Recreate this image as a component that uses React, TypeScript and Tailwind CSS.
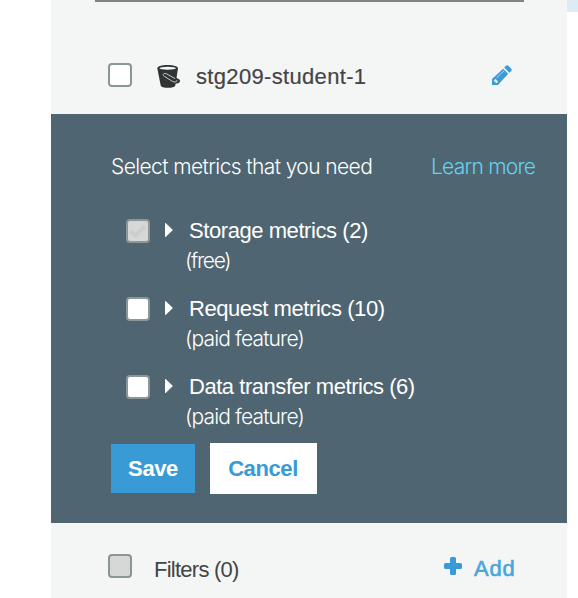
import React from "react";

const SANS = "font-['Liberation_Sans',Arial,sans-serif]";
const LIGHT = "font-['Inter',sans-serif] font-light";

function Checkbox({ className = "", checked = false }: { className?: string; checked?: boolean }) {
  return (
    <span className={`flex size-6 shrink-0 items-center justify-center rounded-[4px] border-2 ${className}`}>
      {checked && (
        <svg viewBox="0 0 18 14" className="h-3.5 w-[18px]" fill="none" stroke="#cbcecd" strokeWidth="4">
          <path d="M1.5 7 6.5 11.5 16 2" />
        </svg>
      )}
    </span>
  );
}

function BucketIcon() {
  return (
    <svg viewBox="0 0 24 24" className="size-6" fill="none">
      <path d="M.3 3.300C.3 1.300 4.800 0 10.500 0S21 1.300 21 3.300L18.300 20.500C17.600 23.600 4.300 23.600 3.700 20.500Z" fill="#303434" />
      <ellipse cx="10.700" cy="3.200" rx="8.300" ry="1.500" fill="#f4f6f6" />
      <path d="M18.500 13.600C20.500 15.400 21.800 14.200 22 15.800 22 18.200 17.500 17.800 13 15" stroke="#303434" strokeWidth="2.200" strokeLinecap="round" />
      <path d="M17.800 13.400 9.200 8.700C6.800 7.700 5 9.700 7.300 11.300L14.500 15.800C16.500 17 18 17.300 19 16.700" stroke="#d8dbdb" strokeWidth="0.900" strokeLinecap="round" />
    </svg>
  );
}

function PencilIcon() {
  return (
    <svg viewBox="0 0 20 20" className="size-5">
      <path d="M0 14 11.200 3.800 16.200 8.800 6 20H0Z" fill="#3a9bd7" />
      <path d="m12.200 2.600 1.500-1.700c.8-.9 2-.9 2.900 0l2.500 2.500c.9.900.9 2 0 2.900L17.400 7.800Z" fill="#3a9bd7" />
      <path d="m4.600 12.800 7.600-7.200" stroke="#b3d7ed" strokeWidth="1" />
      <path d="m2 15 1.500-1 2.600 2.600-1 1.500H3.500V16.500H2Z" fill="#e4eff5" />
    </svg>
  );
}

function Metric({ name, note, tracking, noteTracking, checked = false }: { name: string; note: string; tracking: string; noteTracking: string; checked?: boolean }) {
  return (
    <div className="flex h-[78px] items-start">
      <Checkbox checked={checked} className={`mt-[3px] border-[#8e9798] ${checked ? "bg-[#d5d8d7]" : "bg-white"}`} />
      <svg viewBox="0 0 8 14" className="mt-[7px] ml-[15px] h-3.5 w-2 shrink-0" fill="white">
        <path d="M0 .6C0 0 .5 0 .9.300L7.400 6.400Q8 7 7.400 7.600L.9 13.700C.4 14 0 14 0 13.400Z" />
      </svg>
      <div className="ml-3 leading-[30px] text-white">
        <div className={`pl-1 text-[22px] ${tracking} ${SANS}`}>{name}</div>
        <div className={`text-[21px] ${noteTracking} ${LIGHT}`}>{note}</div>
      </div>
    </div>
  );
}

export default function App() {
  return (
    <div className={`flex h-[598px] w-[578px] overflow-hidden bg-white whitespace-nowrap ${SANS}`}>
      <main className="ml-[51px] w-[516px] shrink-0 bg-[#f4f6f6]">
        <section className="h-[114px]">
          <div className="ml-11 h-0.5 w-[429px] bg-[#828282]" />
          <div className="flex items-start pt-[61px] pl-[57px]">
            <Checkbox className="border-[#8b9697] bg-white" />
            <span className="mt-[2px] ml-[25px]"><BucketIcon /></span>
            <span className="-mt-px ml-[15px] w-[180px] text-[22px] leading-[30px] tracking-[0.33px] text-[#444] [-webkit-text-stroke:0.2px_#444]">stg209-student-1</span>
            <span className="mt-[2px] ml-[116px]"><PencilIcon /></span>
          </div>
        </section>
        <section className="h-[409px] bg-[#4f6672] pt-[38px] pl-[60px]">
          <div className={`flex text-[21px] leading-[30px] ${LIGHT}`}>
            <span className="w-[320px] tracking-[-0.6px] text-white">Select metrics that you need</span>
            <a className="tracking-[-0.77px] text-[#65d2ee]">Learn more</a>
          </div>
          <div className="pt-[34px] pl-[15px]">
            <Metric name="Storage metrics (2)" note="(free)" tracking="tracking-[-0.43px]" noteTracking="tracking-[-1.3px]" checked />
            <Metric name="Request metrics (10)" note="(paid feature)" tracking="tracking-[-0.43px]" noteTracking="tracking-[-0.85px]" />
            <Metric name="Data transfer metrics (6)" note="(paid feature)" tracking="tracking-[-0.46px]" noteTracking="tracking-[-0.85px]" />
          </div>
          <div className="-mt-[7px] flex items-center gap-[15px] text-[22px] font-bold">
            <button className="h-[49px] w-[84px] bg-[#389bd6] tracking-[-0.4px] text-white">Save</button>
            <button className="h-[51px] w-[107px] bg-white pr-px tracking-[-0.4px] text-[#389bd6]">Cancel</button>
          </div>
        </section>
        <section className="flex items-start pt-[31px] pl-[57px]">
          <Checkbox className="border-[#8b9697] bg-[#d5d8d7]" />
          <span className="mt-px ml-[22px] w-[289px] text-[22px] leading-[30px] tracking-[-0.75px] text-[#444]">Filters (0)</span>
          <svg viewBox="0 0 18 18" className="mt-[3px] ml-px size-[18px]" fill="#389bd6">
            <path d="M7.500 0h3q1.500 0 1.500 1.500V6h4.500Q18 6 18 7.500v3Q18 12 16.500 12H12v4.500Q12 18 10.500 18h-3Q6 18 6 16.500V12H1.500Q0 12 0 10.500v-3Q0 6 1.500 6H6V1.500Q6 0 7.500 0Z" />
          </svg>
          <span className="mt-px ml-3 text-[22px] leading-[28px] tracking-[0.8px] text-[#4aa5da] [-webkit-text-stroke:0.6px_#4aa5da]">Add</span>
        </section>
      </main>
      <aside className="h-3 w-[11px] bg-[#dcecf5]" />
    </div>
  );
}
